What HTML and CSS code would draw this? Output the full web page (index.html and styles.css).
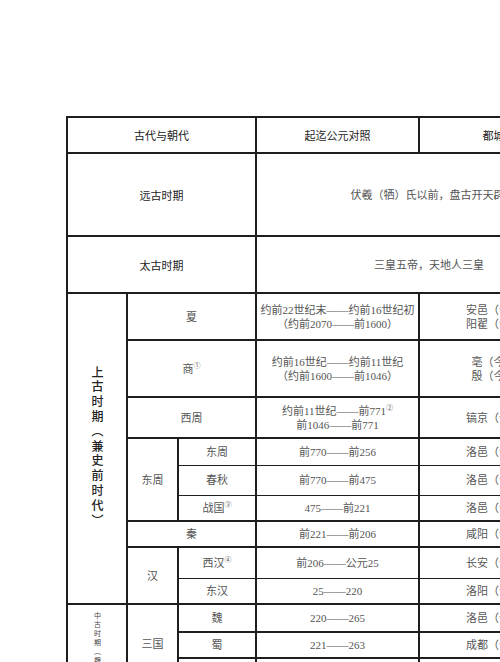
FILE: index.html
```html
<!DOCTYPE html>
<html lang="zh">
<head>
<meta charset="utf-8">
<link rel="stylesheet" href="styles.css">
</head>
<body>
<table class="chrono">
  <colgroup>
    <col class="c1"><col class="c2"><col class="c3"><col class="c4"><col class="c5">
  </colgroup>
  <tr class="r-head">
    <th colspan="3">古代与朝代</th><th>起迄公元对照</th><th>都城（今地）</th>
  </tr>
  <tr class="r-yuan">
    <td colspan="3" class="hei">远古时期</td><td colspan="2" class="wide wide-first">伏羲（牺）氏以前，盘古开天辟地</td>
  </tr>
  <tr class="r-tai">
    <td colspan="3" class="hei">太古时期</td><td colspan="2" class="wide">三皇五帝，天地人三皇</td>
  </tr>
  <tr class="r-xia">
    <td rowspan="9" class="era"><div class="vert">上古时期（兼史前时代）</div></td>
    <td colspan="2">夏</td><td>约前22世纪末——约前16世纪初<br>（约前2070——前1600）</td><td>安邑（今山西夏县）<br>阳翟（今河南禹州）</td>
  </tr>
  <tr class="r-shang">
    <td colspan="2">商<sup>①</sup></td><td>约前16世纪——约前11世纪<br>（约前1600——前1046）</td><td>亳（今河南商丘）<br>殷（今河南安阳）</td>
  </tr>
  <tr class="r-xizhou">
    <td colspan="2">西周</td><td>约前11世纪——前771<sup>②</sup><br>前1046——前771</td><td>镐京（今陕西西安）</td>
  </tr>
  <tr class="r-dongzhou">
    <td rowspan="3" class="grp">东周</td><td class="tb">东周</td><td class="tb">前770——前256</td><td class="tb">洛邑（今河南洛阳）</td>
  </tr>
  <tr class="r-chunqiu">
    <td class="tt tb">春秋</td><td class="tt tb">前770——前475</td><td class="tt tb">洛邑（今河南洛阳）</td>
  </tr>
  <tr class="r-zhanguo">
    <td class="tt">战国<sup>③</sup></td><td class="tt">475——前221</td><td class="tt">洛邑（今河南洛阳）</td>
  </tr>
  <tr class="r-qin">
    <td colspan="2">秦</td><td>前221——前206</td><td>咸阳（今陕西咸阳）</td>
  </tr>
  <tr class="r-xihan">
    <td rowspan="2" class="grp">汉</td><td class="tb">西汉<sup>④</sup></td><td class="tb">前206——公元25</td><td class="tb">长安（今陕西西安）</td>
  </tr>
  <tr class="r-donghan">
    <td class="tt">东汉</td><td class="tt">25——220</td><td class="tt">洛阳（今河南洛阳）</td>
  </tr>
  <tr class="r-wei">
    <td rowspan="6" class="era era-small"><div class="vert vert-small">中古时期（魏晋南北朝）</div></td>
    <td rowspan="3" class="grp">三国</td><td>魏</td><td>220——265</td><td>洛邑（今河南洛阳）</td>
  </tr>
  <tr class="r-shu">
    <td>蜀</td><td>221——263</td><td>成都（今四川成都）</td>
  </tr>
  <tr class="r-wu">
    <td>吴</td><td>222——280</td><td>建业（今江苏南京）</td>
  </tr>
  <tr class="r-jin">
    <td rowspan="2" class="grp">晋</td><td>西晋</td><td>265——317</td><td>洛阳（今河南洛阳）</td>
  </tr>
  <tr class="r-jin">
    <td>东晋</td><td>317——420</td><td>建康（今江苏南京）</td>
  </tr>
  <tr class="r-jin">
    <td colspan="2">南北朝</td><td>420——589</td><td>建康（今江苏南京）</td>
  </tr>
</table>
</body>
</html>
```
FILE: styles.css
```css
html, body {
  margin: 0;
  padding: 0;
  background: #ffffff;
  overflow: hidden;
  width: 500px;
  height: 662px;
}

.chrono {
  margin: 116px 0 0 66px;
  border-collapse: collapse;
  table-layout: fixed;
  width: 545px;
  font-family: "Liberation Serif", "Noto Sans CJK SC", serif;
  font-size: 11px;
  line-height: 14px;
  color: #555555;
  font-weight: 400;
}

.c1 { width: 60px; }
.c2 { width: 51px; }
.c3 { width: 78px; }
.c4 { width: 163px; }
.c5 { width: 193px; }

.chrono th,
.chrono td {
  border: 2px solid #1e1e1e;
  padding: 0;
  text-align: center;
  vertical-align: middle;
  white-space: nowrap;
  overflow: hidden;
}

.chrono td.tb { border-bottom-width: 1px; }
.chrono td.tt { border-top-width: 1px; }

.chrono th,
.chrono td.hei {
  font-family: "Noto Sans CJK SC", sans-serif;
  font-weight: 400;
  color: #222222;
}

.chrono td.wide {
  padding-right: 10px;
}

.chrono td.wide-first {
  padding-right: 2px;
}

.r-head { height: 36px; }
.r-yuan { height: 83px; }
.r-tai { height: 57px; }
.r-xia { height: 47px; }
.r-shang { height: 57px; }
.r-xizhou { height: 41px; }
.r-dongzhou { height: 27px; }
.r-chunqiu { height: 30px; }
.r-zhanguo { height: 26px; }
.r-qin { height: 26px; }
.r-xihan { height: 31px; }
.r-donghan { height: 26px; }
.r-wei { height: 28px; }
.r-shu { height: 26px; }
.r-wu { height: 26px; }
.r-jin { height: 26px; }

.chrono sup {
  font-size: 7px;
  line-height: 0;
  vertical-align: 5px;
}

.era {
  font-family: "Noto Sans CJK SC", sans-serif;
  color: #222222;
}

.vert {
  display: inline-block;
  writing-mode: vertical-rl;
  font-size: 12px;
  line-height: 12px;
  letter-spacing: 2.8px;
  font-weight: 500;
}

.chrono td.era-small {
  vertical-align: top;
  padding-top: 7px;
}

.vert-small {
  font-size: 7px;
  line-height: 7px;
  letter-spacing: 2px;
  font-weight: 400;
  color: #444444;
}
```
